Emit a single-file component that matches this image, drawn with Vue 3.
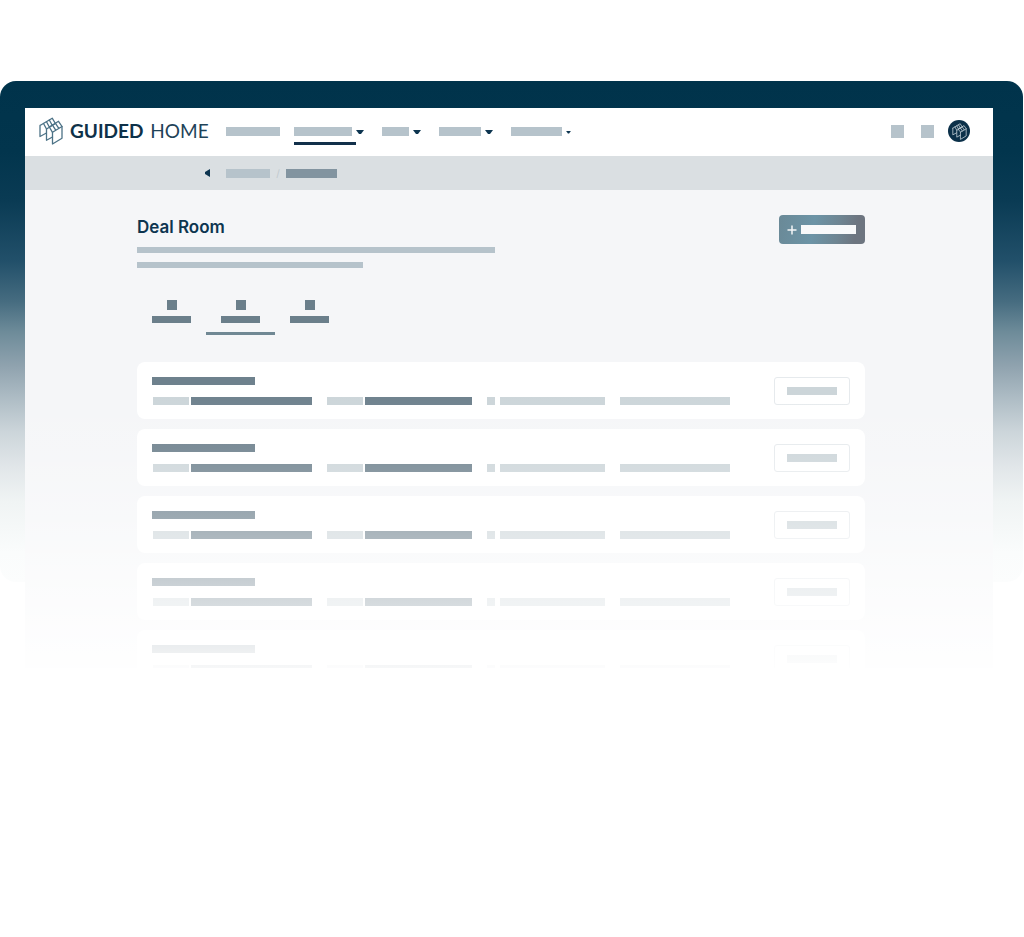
<script setup>
const navItems = [
  { label: 'Dashboard', width: 54, caret: false, active: false },
  { label: 'Transactions', width: 58, caret: true, active: true },
  { label: 'Tools', width: 27, caret: true, active: false },
  { label: 'Contacts', width: 42, caret: true, active: false },
  { label: 'Resources', width: 51, caret: true, small: true, active: false }
]

const tabs = [
  { label: 'Overview', active: false },
  { label: 'Offers', active: true },
  { label: 'Files', active: false }
]

const cards = [1, 2, 3, 4, 5]
</script>

<template>
  <svg class="symbols" aria-hidden="true">
    <symbol id="mark" viewBox="0 0 24 28">
      <g fill="none" stroke="currentColor" stroke-width="1.3" stroke-linejoin="round" stroke-linecap="round">
        <path d="M1 8.500 13.200 1.200 15.800 5.500M1 8.500V19.500L7 16.300" />
        <path d="M4.500 6.500 7.500 12V23.300L13.500 20" />
        <path d="M7.500 12 16.500 6.500M7.500 4.700 10.300 10M10.300 3 13.200 8.200" />
        <path d="M10.300 10 19.500 4.300 23 9.500V21.300L13.500 27V15.300Z" />
        <path d="M13.500 15.300 23 9.500M13.500 8.200 16.700 13.200M16.500 6.300 19.800 11.300" />
      </g>
    </symbol>
  </svg>

  <main class="page">
    <div class="device">
      <div class="screen">
        <header class="topbar">
          <a class="brand" href="#">
            <svg class="brand-mark" aria-hidden="true"><use href="#mark" /></svg>
            <span class="brand-text"><strong>GUIDED</strong><span>HOME</span></span>
          </a>
          <nav class="nav" aria-label="Main">
            <a
              v-for="item in navItems"
              :key="item.label"
              class="nav-item"
              :class="{ active: item.active }"
              href="#"
              :aria-label="item.label"
            >
              <span class="bar nav-bar" :style="{ width: item.width + 'px' }"></span>
              <svg v-if="item.caret" class="caret" :class="{ small: item.small }" viewBox="0 0 8 5" aria-hidden="true">
                <path d="M0 0h8L5 4H3z" fill="currentColor" />
              </svg>
            </a>
          </nav>
          <div class="actions">
            <button class="square" type="button" aria-label="Search"></button>
            <button class="square" type="button" aria-label="Notifications"></button>
            <button class="avatar" type="button" aria-label="Account">
              <svg aria-hidden="true"><use href="#mark" /></svg>
            </button>
          </div>
        </header>

        <nav class="crumbs" aria-label="Breadcrumb">
          <a class="back" href="#" aria-label="Back">
            <svg viewBox="0 0 5 8" aria-hidden="true"><path d="M5 0v8L0 5V3z" fill="currentColor" /></svg>
          </a>
          <a class="bar crumb" href="#" aria-label="Parent page"></a>
          <span class="slash">/</span>
          <a class="bar crumb current" href="#" aria-label="Current page"></a>
        </nav>

        <section class="content">
          <div class="intro">
            <div class="intro-text">
              <h1>Deal Room</h1>
              <span class="bar line long"></span>
              <span class="bar line short"></span>
            </div>
            <button class="primary" type="button" aria-label="Add">
              <svg viewBox="0 0 10 10" aria-hidden="true"><path d="M5 0.500v9M0.500 5h9" stroke="currentColor" stroke-width="1.500" /></svg>
              <span class="bar"></span>
            </button>
          </div>

          <div class="tabs">
            <button
              v-for="tab in tabs"
              :key="tab.label"
              class="tab"
              :class="{ active: tab.active }"
              type="button"
              :aria-label="tab.label"
            >
              <span class="tab-icon"></span>
              <span class="tab-label"></span>
            </button>
          </div>

          <ul class="cards">
            <li v-for="card in cards" :key="card" class="card">
              <div class="details">
                <span class="seg dark title"></span>
                <div class="meta">
                  <span class="pair"><span class="seg key"></span><span class="seg dark value-a"></span></span>
                  <span class="pair"><span class="seg key"></span><span class="seg dark value-b"></span></span>
                  <span class="pair icon-pair"><span class="seg dot"></span><span class="seg value-c"></span></span>
                  <span class="seg value-d"></span>
                </div>
              </div>
              <button class="open" type="button" aria-label="Open"><span class="seg"></span></button>
            </li>
          </ul>
        </section>
      </div>
    </div>
  </main>
</template>

<style>
body {
  background: #fff;
}
</style>

<style scoped>
* {
  box-sizing: border-box;
}

button {
  border: 0;
  padding: 0;
  background: none;
  font: inherit;
}

a {
  color: inherit;
  text-decoration: none;
}

.symbols {
  position: absolute;
  width: 0;
  height: 0;
}

.page {
  padding: 81px 1px 0 0;
  font-family: Inter, "Liberation Sans", sans-serif;
  color: #0d3550;
}

.device {
  position: relative;
  padding: 27px 30px 0 25px;
}

.device::before {
  content: "";
  position: absolute;
  inset: 0 0 86px;
  border-radius: 16px;
  background: linear-gradient(
    #00334b 0%, #02354d 14%, #0a3b54 24%, #22506a 36%, #466c80 44%,
    #6d8b99 50%, #90a3af 57%, #b1bfc7 64%, #ccd5da 70%, #e1e6e9 77%,
    #f0f4f4 84%, #fafcfc 94%, #fcfdfd 100%
  );
}

.screen {
  position: relative;
  overflow: hidden;
  background: #f5f6f8;
}

.screen::after {
  content: "";
  position: absolute;
  inset: 0;
  pointer-events: none;
  background: linear-gradient(
    rgb(255 255 255 / 0) 50%, rgb(255 255 255 / 0.1) 61%,
    rgb(255 255 255 / 0.17) 64%, rgb(255 255 255 / 0.32) 73%,
    rgb(255 255 255 / 0.42) 76%, rgb(255 255 255 / 0.63) 85%,
    rgb(255 255 255 / 0.7) 88%, rgb(255 255 255 / 0.88) 97%,
    rgb(255 255 255 / 0.94) 100%
  );
}

.bar {
  display: block;
  background: #b6c3cb;
}

.topbar {
  display: flex;
  align-items: center;
  height: 48px;
  padding: 0 23px 2px 14px;
  background: #fff;
}

.brand {
  display: flex;
  align-items: center;
  gap: 7px;
  width: 187px;
}

.brand-mark {
  width: 24px;
  height: 28px;
  color: #4c7286;
}

.brand-text {
  display: flex;
  gap: 7px;
  font-family: Lato, "Liberation Sans", sans-serif;
  font-size: 19px;
  line-height: 24px;
  color: #1f4359;
}

.brand-text strong {
  font-weight: 700;
  color: #0e3149;
}

.nav {
  display: flex;
  align-items: center;
  gap: 14px;
}

.nav-item {
  position: relative;
  display: flex;
  align-items: center;
  gap: 4px;
  height: 27px;
}

.nav-bar {
  height: 9px;
}

.nav-item.active::after {
  content: "";
  position: absolute;
  left: 0;
  right: 12px;
  bottom: 0;
  height: 3px;
  background: #12304a;
}

.caret {
  width: 8px;
  height: 5px;
  margin-top: 2px;
  margin-right: 4px;
}

.caret.small {
  width: 5px;
  height: 3px;
}

.actions {
  display: flex;
  align-items: center;
  gap: 17px;
  margin-left: auto;
}

.square {
  width: 13px;
  height: 13px;
  background: #b6c3cb;
}

.avatar {
  display: grid;
  place-items: center;
  width: 22px;
  height: 22px;
  margin-left: -3px;
  border-radius: 50%;
  background: #0b3049;
  color: #c3d0d8;
}

.avatar svg {
  width: 15px;
  height: 17px;
}

.crumbs {
  display: flex;
  align-items: center;
  height: 34px;
  padding-left: 180px;
  background: #dadfe2;
}

.back {
  display: flex;
  width: 21px;
}

.back svg {
  width: 5px;
  height: 8px;
}

.crumb {
  width: 44px;
  height: 9px;
}

.crumb.current {
  width: 51px;
  background: #8294a0;
}

.slash {
  width: 16px;
  text-align: center;
  font-size: 10px;
  line-height: 12px;
  color: #c1c9ce;
}

.content {
  padding: 25px 128px 0 112px;
}

.intro {
  display: flex;
  justify-content: space-between;
  align-items: flex-start;
}

.intro-text {
  flex: 1;
}

h1 {
  margin: 0 0 8px;
  font-size: 17px;
  font-weight: 600;
  line-height: 24px;
}

.line {
  height: 6px;
}

.line.long {
  max-width: 358px;
}

.line.short {
  max-width: 226px;
  margin-top: 9px;
}

.primary {
  display: flex;
  align-items: center;
  gap: 4px;
  width: 86px;
  height: 29px;
  padding-left: 8px;
  border-radius: 4px;
  background: linear-gradient(100deg, #6a8997 0%, #6c94a6 40%, #6e8592 68%, #6d7580 88%);
  color: #f5f6f8;
}

.primary svg {
  width: 10px;
  height: 10px;
}

.primary .bar {
  width: 55px;
  height: 9px;
  background: #f8f9fa;
}

.tabs {
  display: flex;
  margin-top: 32px;
}

.tab {
  display: flex;
  flex-direction: column;
  align-items: center;
  gap: 6px;
  width: 69px;
  height: 35px;
}

.tab.active {
  border-bottom: 3px solid #708894;
}

.tab-icon {
  width: 10px;
  height: 10px;
  background: #6b7f8b;
}

.tab-label {
  width: 39px;
  height: 7px;
  background: #6b7f8b;
}

.cards {
  display: flex;
  flex-direction: column;
  gap: 10px;
  margin: 27px 0 -19px;
  padding: 0;
  list-style: none;
}

.card {
  display: flex;
  justify-content: space-between;
  align-items: center;
  height: 57px;
  padding: 0 15px;
  border-radius: 8px;
  background: #fff;
}

.details {
  display: flex;
  flex-direction: column;
  gap: 12px;
}

.seg {
  display: block;
  height: 8px;
  background: #ccd5d9;
}

.seg.dark {
  background: #6e818d;
}

.title {
  width: 103px;
}

.meta {
  display: flex;
  gap: 15px;
  padding-left: 1px;
}

.pair {
  display: flex;
  gap: 2px;
}

.icon-pair {
  gap: 5px;
}

.key {
  width: 36px;
}

.value-a {
  width: 121px;
}

.value-b {
  width: 107px;
}

.dot {
  width: 8px;
}

.value-c {
  width: 105px;
}

.value-d {
  width: 110px;
}

.open {
  display: grid;
  place-items: center;
  width: 76px;
  height: 28px;
  border: 1px solid #e6eaed;
  border-radius: 3px;
}

.open .seg {
  width: 50px;
}
</style>
